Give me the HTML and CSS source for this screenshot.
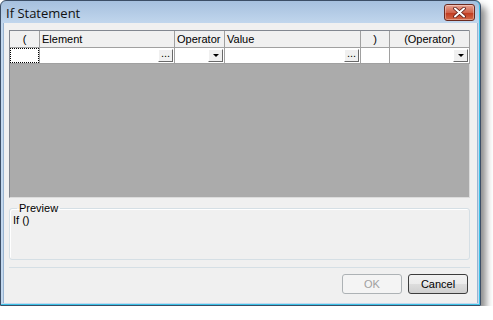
FILE: index.html
```html
<!DOCTYPE html>
<html lang="en">
<head>
    <meta charset="UTF-8">
    <title>If Statement</title>
    <link rel="stylesheet" href="styles.css">
</head>
<body>
    <div class="window">
        <div class="titlebar">
            <span class="title">If Statement</span>
            <button class="close-button">
                <svg width="13" height="11" viewBox="0 0 13 11">
                    <path d="M2 1.5 L11 9.5 M11 1.5 L2 9.5" stroke="#5a1a14" stroke-width="3.6" stroke-linecap="round"/>
                    <path d="M2 1.5 L11 9.5 M11 1.5 L2 9.5" stroke="#fff" stroke-width="2" stroke-linecap="round"/>
                </svg>
            </button>
        </div>
        <div class="client">
            <div class="grid">
                <table class="rows">
                    <tr class="head">
                        <th class="c-open center">(</th>
                        <th class="c-element">Element</th>
                        <th class="c-op">Operator</th>
                        <th class="c-value">Value</th>
                        <th class="c-close center">)</th>
                        <th class="c-next center">(Operator)</th>
                    </tr>
                    <tr class="data">
                        <td class="c-open"><div class="focus"></div></td>
                        <td class="c-element"><span class="dots">...</span></td>
                        <td class="c-op"><span class="drop"><i class="arrow"></i></span></td>
                        <td class="c-value"><span class="dots">...</span></td>
                        <td class="c-close"></td>
                        <td class="c-next"><span class="drop"><i class="arrow"></i></span></td>
                    </tr>
                </table>
            </div>

            <fieldset class="preview">
                <legend>Preview</legend>
                <div class="preview-text">If ()</div>
            </fieldset>

            <div class="actions">
                <button class="btn" disabled>OK</button>
                <button class="btn default">Cancel</button>
            </div>
        </div>
    </div>
</body>
</html>
```

FILE: styles.css
```css
body {
    margin: 0;
    background-color: #fff;
    font-family: "Liberation Sans", Arial, sans-serif;
    font-size: 11px;
    color: #000;
}
.window {
    width: 475px;
    height: 302px;
    border: 1px solid #3c4e66;
    border-radius: 6px 6px 0 0;
    background: linear-gradient(#a6c0de, #c3d8ee 24px);
    padding: 0 2px 2px 2px;
    box-shadow: 5px 6px 7px rgba(0, 0, 0, 0.45), inset 0 -1px 0 #3cc3e8, inset -1px 0 0 #3cc3e8;
    display: flex;
    flex-direction: column;
}
.titlebar {
    height: 22px;
    display: flex;
    align-items: center;
    justify-content: space-between;
    padding-left: 3px;
}
.title {
    font-family: "Open Sans", "Liberation Sans", sans-serif;
    font-size: 13px;
    color: #111;
    margin-top: 2px;
}
.close-button {
    width: 31px;
    height: 17px;
    margin-top: 1px;
    margin-right: 3px;
    border: 1px solid #6b2a20;
    border-radius: 3px;
    background: linear-gradient(#e8a393, #d0644c 50%, #c0391f 52%, #d26a4a);
    display: flex;
    align-items: center;
    justify-content: center;
    padding: 0;
    box-shadow: inset 0 0 0 1px rgba(255, 255, 255, 0.35);
}
.client {
    flex: 1;
    background-color: #f0f0f0;
    border: 1px solid #99b4d1;
    border-top: none;
    border-bottom: none;
    display: flex;
    flex-direction: column;
    padding: 7px 7px 0 5px;
}
.grid {
    height: 166px;
    background-color: #ababab;
    border: 1px solid #828790;
    border-right-color: #dcdcdc;
    border-bottom-color: #dcdcdc;
}
.rows {
    border-collapse: collapse;
    table-layout: fixed;
    width: 460px;
}
.rows th, .rows td {
    border-right: 1px solid #a0a0a0;
    border-bottom: 1px solid #a0a0a0;
    padding: 0 2px;
    font-weight: normal;
    text-align: left;
    white-space: nowrap;
    overflow: hidden;
}
.rows .center {
    text-align: center;
}
.head th {
    height: 16px;
    background-color: #f0f0f0;
}
.data td {
    height: 15px;
    background-color: #fff;
    position: relative;
}
.c-open { width: 25px; }
.c-element { width: 130px; }
.c-op { width: 45px; }
.c-value { width: 131px; }
.c-close { width: 24px; }
.c-next { width: 75px; }
.focus {
    position: absolute;
    left: 0;
    top: 0;
    right: 0;
    bottom: 0;
    border: 1px dotted #000;
}
.dots, .drop {
    position: absolute;
    right: 1px;
    top: 1px;
    width: 15px;
    height: 13px;
    background-color: #f0f0f0;
    border: 1px solid #fff;
    border-right-color: #696969;
    border-bottom-color: #696969;
    box-sizing: border-box;
    font-size: 11px;
    line-height: 6px;
    text-align: center;
}
.arrow {
    position: absolute;
    left: 4px;
    top: 4px;
    border-left: 3px solid transparent;
    border-right: 3px solid transparent;
    border-top: 3px solid #000;
}
.preview {
    margin: 4px 0 0 0;
    padding: 0 3px;
    height: 56px;
    border: 1px solid #d5dfe5;
    border-radius: 3px;
    box-shadow: inset 1px 1px 0 #fff;
}
.preview legend {
    padding: 0 2px;
    margin-left: 4px;
    color: #000;
}
.preview-text {
    margin-top: 0;
}
.actions {
    margin-top: 7px;
    border-top: 1px solid #d5dfe5;
    display: flex;
    justify-content: flex-end;
    gap: 6px;
    padding-top: 6px;
    padding-right: 2px;
}
.btn {
    width: 60px;
    height: 20px;
    font-family: "Liberation Sans", Arial, sans-serif;
    font-size: 11px;
    border: 1px solid #707070;
    border-radius: 3px;
    background: linear-gradient(#f2f2f2, #ebebeb 50%, #dddddd 51%, #cfcfcf);
    color: #000;
    padding: 0;
}
.btn:disabled {
    border-color: #adb2b5;
    background: #f4f4f4;
    color: #a0a0a0;
}
.btn.default {
    border-color: #3c3c3c;
}
```
